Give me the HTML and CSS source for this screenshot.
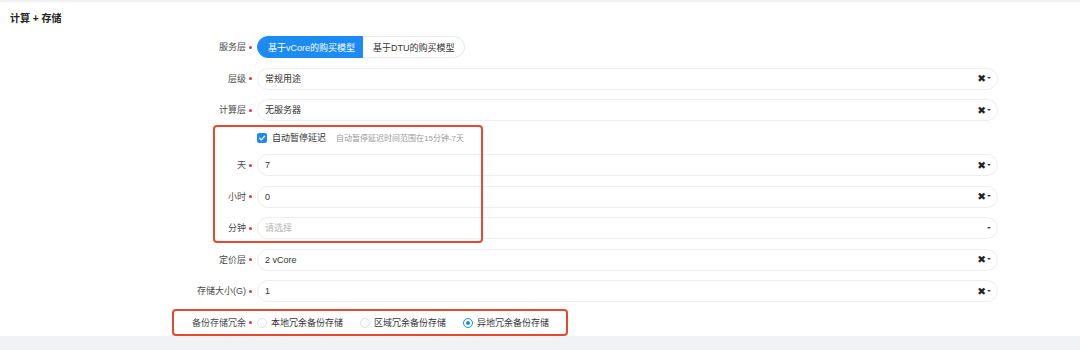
FILE: index.html
```html
<!DOCTYPE html>
<html lang="zh-CN">
<head>
<meta charset="utf-8">
<title>计算 + 存储</title>
<link rel="stylesheet" href="styles.css">
</head>
<body>
<div class="topline"></div>
<h2 class="title">计算 + 存储</h2>
<div class="form">
  <div class="row">
    <label class="lbl">服务层<i class="req"></i></label>
    <div class="seg">
      <span class="seg-item active">基于vCore的购买模型</span>
      <span class="seg-item">基于DTU的购买模型</span>
    </div>
  </div>
  <div class="row">
    <label class="lbl">层级<i class="req"></i></label>
    <div class="select"><span class="val">常规用途</span><span class="icons"><span class="clear">✖</span><i class="caret"></i></span></div>
  </div>
  <div class="row">
    <label class="lbl">计算层<i class="req"></i></label>
    <div class="select"><span class="val">无服务器</span><span class="icons"><span class="clear">✖</span><i class="caret"></i></span></div>
  </div>
  <div class="group g1">
    <div class="row row-check">
      <span class="lbl"></span>
      <div class="check-line">
        <span class="checkbox"><svg viewBox="0 0 10 10" width="8" height="8"><path d="M2 5.2 L4.2 7.3 L8.2 2.8" fill="none" stroke="#fff" stroke-width="1.6" stroke-linecap="round" stroke-linejoin="round"/></svg></span>
        <span class="check-label">自动暂停延迟</span>
        <span class="hint">自动暂停延迟时间范围在15分钟-7天</span>
      </div>
    </div>
    <div class="row">
      <label class="lbl">天<i class="req"></i></label>
      <div class="select"><span class="val">7</span><span class="icons"><span class="clear">✖</span><i class="caret"></i></span></div>
    </div>
    <div class="row">
      <label class="lbl">小时<i class="req"></i></label>
      <div class="select"><span class="val">0</span><span class="icons"><span class="clear">✖</span><i class="caret"></i></span></div>
    </div>
    <div class="row">
      <label class="lbl">分钟<i class="req"></i></label>
      <div class="select"><span class="val placeholder">请选择</span><span class="icons"><i class="caret"></i></span></div>
    </div>
  </div>
  <div class="row">
    <label class="lbl">定价层<i class="req"></i></label>
    <div class="select"><span class="val">2 vCore</span><span class="icons"><span class="clear">✖</span><i class="caret"></i></span></div>
  </div>
  <div class="row">
    <label class="lbl">存储大小(G)<i class="req"></i></label>
    <div class="select"><span class="val">1</span><span class="icons"><span class="clear">✖</span><i class="caret"></i></span></div>
  </div>
  <div class="group g2">
    <div class="row">
      <label class="lbl">备份存储冗余<i class="req"></i></label>
      <div class="radios">
        <label class="radio"><span class="dot"></span>本地冗余备份存储</label>
        <label class="radio"><span class="dot"></span>区域冗余备份存储</label>
        <label class="radio checked"><span class="dot"></span>异地冗余备份存储</label>
      </div>
    </div>
  </div>
</div>
<div class="footer"></div>
</body>
</html>
```
FILE: styles.css
```css
html, body {
  margin: 0;
  padding: 0;
  overflow: hidden;
  background: #fff;
}
body {
  font-family: "Liberation Sans", "Noto Sans CJK SC", sans-serif;
  color: #333;
  width: 1080px;
  height: 350px;
}
.topline {
  height: 2px;
  background: #f2f2f2;
}
.title {
  margin: 0;
  padding: 10px 0 0 10px;
  font-size: 10px;
  line-height: 14px;
  font-weight: bold;
  color: #222;
}
.form {
  margin-top: 10px;
  display: flex;
  flex-direction: column;
  gap: 9.5px;
}
.group {
  position: relative;
  display: flex;
  flex-direction: column;
  gap: 9.5px;
}
.group::after {
  content: "";
  position: absolute;
  border: 2px solid #e6492f;
  border-radius: 4px;
  box-sizing: border-box;
  pointer-events: none;
}
.g1::after {
  left: 213px;
  width: 270px;
  top: -6px;
  bottom: -4px;
}
.g2::after {
  left: 172px;
  width: 396px;
  top: -3px;
  bottom: -2px;
}
.row {
  display: grid;
  grid-template-columns: 252px 741px;
  column-gap: 5px;
  height: 22px;
  align-items: center;
}
.row-check {
  height: 14px;
}
.lbl {
  display: flex;
  justify-content: flex-end;
  align-items: center;
  font-size: 9px;
  line-height: 12px;
  color: #4a4a4a;
}
.req {
  display: inline-block;
  width: 3px;
  height: 3px;
  border-radius: 50%;
  background: #e53935;
  margin-left: 3px;
}
.seg {
  display: flex;
  height: 22px;
}
.seg-item {
  display: flex;
  align-items: center;
  padding: 0 9px 0 10px;
  font-size: 9px;
  color: #333;
  border: 1px solid #ebebeb;
  border-left: none;
  border-radius: 0 11px 11px 0;
  box-sizing: border-box;
}
.seg-item.active {
  background: #1c8bf3;
  color: #fff;
  border: 1px solid #1c8bf3;
  border-radius: 11px 0 0 11px;
  width: 106px;
  padding: 0 0 0 10px;
}
.select {
  display: flex;
  align-items: center;
  justify-content: space-between;
  height: 22px;
  box-sizing: border-box;
  border: 1px solid #eeeeee;
  border-radius: 11px;
  padding: 0 6px 0 7px;
  background: #fff;
}
.val {
  font-size: 9px;
  line-height: 12px;
  color: #333;
}
.placeholder {
  color: #b5b5b5;
}
.icons {
  display: flex;
  align-items: center;
  gap: 1px;
}
.clear {
  font-size: 10.5px;
  line-height: 11px;
  color: #222;
  font-family: "DejaVu Sans", sans-serif;
  font-weight: bold;
}
.caret {
  display: inline-block;
  width: 0;
  height: 0;
  border-left: 2px solid transparent;
  border-right: 2px solid transparent;
  border-top: 2.5px solid #444;
  margin-top: -1px;
}
.check-line {
  display: flex;
  align-items: center;
}
.checkbox {
  width: 10px;
  height: 10px;
  border-radius: 2px;
  background: #1c8bf3;
  display: flex;
  align-items: center;
  justify-content: center;
}
.check-label {
  margin-left: 5px;
  font-size: 9px;
  color: #333;
}
.hint {
  margin-left: 10px;
  font-size: 8px;
  color: #999;
}
.radios {
  display: flex;
  align-items: center;
  gap: 17px;
}
.radio {
  display: flex;
  align-items: center;
  font-size: 9px;
  color: #333;
}
.dot {
  width: 10px;
  height: 10px;
  box-sizing: border-box;
  border: 1px solid #e0e0e0;
  border-radius: 50%;
  margin-right: 4px;
  display: flex;
  align-items: center;
  justify-content: center;
}
.radio.checked .dot {
  border-color: #1c8bf3;
}
.radio.checked .dot::after {
  content: "";
  width: 4px;
  height: 4px;
  border-radius: 50%;
  background: #1c8bf3;
}
.footer {
  margin-top: 2px;
  height: 20px;
  background: #f0f2f5;
}
```
